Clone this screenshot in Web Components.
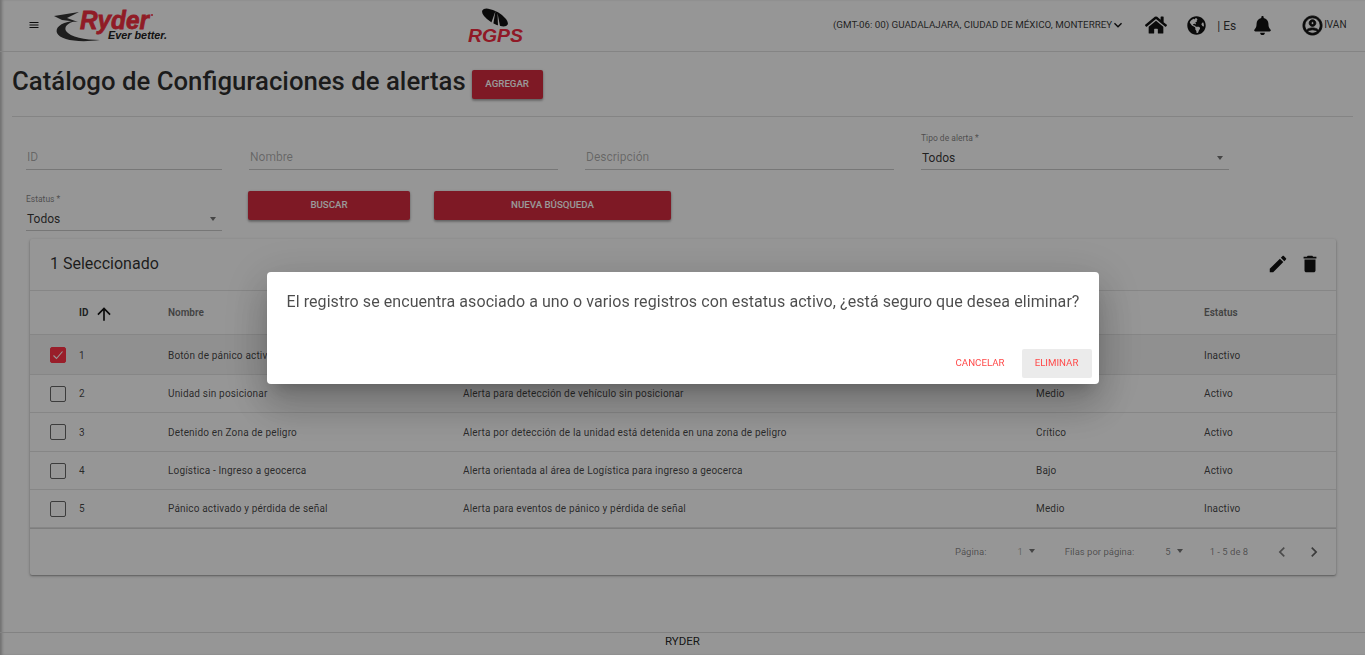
<!DOCTYPE html>
<html lang="es">
<head>
<meta charset="utf-8">
<title>Catálogo de Configuraciones de alertas</title>
<style>
  html, body { margin: 0; height: 100%; background: #fafafa; overflow: hidden; }
  body { font-family: Roboto, "Liberation Sans", sans-serif; color: rgba(0,0,0,.87); }
</style>
</head>
<body>
<app-shell>
  <app-header slot="header"></app-header>
  <page-title title-text="Catálogo de Configuraciones de alertas"></page-title>
  <search-form></search-form>
  <alert-table></alert-table>
</app-shell>
<confirm-dialog>El registro se encuentra asociado a uno o varios registros con estatus activo, ¿está seguro que desea eliminar?</confirm-dialog>

<script>
const ICONS = {
  menu: ["0 0 24 24", "M3 18h18v-2H3v2zm0-5h18v-2H3v2zm0-7v2h18V6H3z"],
  expand: ["0 0 24 24", "M16.59 8.59L12 13.17 7.41 8.59 6 10l6 6 6-6z"],
  home: ["0 0 576 512", "M280.37 148.26L96 300.11V464a16 16 0 0 0 16 16l112.06-.29a16 16 0 0 0 15.92-16V368a16 16 0 0 1 16-16h64a16 16 0 0 1 16 16v95.64a16 16 0 0 0 16 16.05L464 480a16 16 0 0 0 16-16V300L295.67 148.26a12.19 12.19 0 0 0-15.3 0zM571.6 251.47L488 182.56V44.05a12 12 0 0 0-12-12h-56a12 12 0 0 0-12 12v72.61L318.47 43a48 48 0 0 0-61 0L4.34 251.47a12 12 0 0 0-1.6 16.9l25.5 31A12 12 0 0 0 45.15 301l235.22-193.74a12.19 12.19 0 0 1 15.3 0L530.9 301a12 12 0 0 0 16.9-1.6l25.5-31a12 12 0 0 0-1.7-16.93z"],
  globe: ["0 0 496 512", "M248 8C111.03 8 0 119.03 0 256s111.03 248 248 248 248-111.03 248-248S384.97 8 248 8zm82.29 357.6c-3.9 3.88-7.99 7.95-11.31 11.28-2.99 3-5.1 6.7-6.17 10.71-1.51 5.66-2.73 11.38-4.77 16.87l-17.39 46.85c-13.76 3-28 4.69-42.65 4.69v-27.38c1.69-12.62-7.64-36.26-22.63-51.25-6-6-9.37-14.14-9.37-22.63v-32.01c0-11.64-6.27-22.34-16.46-27.97-14.37-7.95-34.81-19.06-48.81-26.11-11.48-5.78-22.1-13.14-31.65-21.75l-.8-.72a114.792 114.792 0 0 1-18.06-20.74c-9.38-13.77-24.66-36.42-34.59-51.14 20.47-45.5 57.36-82.04 103.2-101.89l24.01 12.01C203.48 89.74 216 82.01 216 70.11v-11.3c7.99-1.29 16.12-2.11 24.39-2.42l28.3 28.3c6.25 6.25 6.25 16.38 0 22.63L264 112l-10.34 10.34c-3.12 3.12-3.12 8.19 0 11.31l4.69 4.69c3.12 3.12 3.12 8.19 0 11.31l-8 8a8.008 8.008 0 0 1-5.66 2.34h-8.99c-2.08 0-4.08.81-5.58 2.27l-9.92 9.65a8.008 8.008 0 0 0-1.58 9.31l15.59 31.19c2.66 5.32-1.21 11.58-7.15 11.58h-5.64c-1.93 0-3.79-.7-5.24-1.96l-9.28-8.06a16.017 16.017 0 0 0-15.55-3.1l-31.17 10.39a11.95 11.95 0 0 0-8.17 11.34c0 4.53 2.56 8.66 6.61 10.69l11.08 5.54c9.41 4.71 19.79 7.16 30.31 7.16s22.59 27.29 32 32h66.75c8.49 0 16.62 3.37 22.63 9.37l13.69 13.69a30.503 30.503 0 0 1 8.93 21.57 46.536 46.536 0 0 1-13.72 32.98zM417 274.25c-5.79-1.45-10.84-5-14.15-9.97l-17.98-26.97a23.97 23.97 0 0 1 0-26.62l19.59-29.38c2.32-3.47 5.5-6.29 9.24-8.15l12.98-6.49C440.2 193.59 448 223.87 448 256c0 8.67-.74 17.16-1.82 25.54L417 274.25z"],
  bell: ["0 0 448 512", "M224 512c35.32 0 63.97-28.65 63.97-64H160.03c0 35.35 28.65 64 63.97 64zm215.39-149.71c-19.32-20.76-55.47-51.99-55.47-154.29 0-77.7-54.48-139.9-127.94-155.16V32c0-17.67-14.32-32-31.98-32s-31.98 14.33-31.98 32v20.84C118.56 68.1 64.08 130.3 64.08 208c0 102.3-36.15 133.53-55.47 154.29-6 6.45-8.66 14.16-8.61 21.71.11 16.4 12.98 32 32.1 32h383.8c19.12 0 32-15.6 32.1-32 .05-7.55-2.61-15.27-8.61-21.71z"],
  account: ["0 0 24 24", "M12 2C6.48 2 2 6.48 2 12s4.48 10 10 10 10-4.48 10-10S17.52 2 12 2zM7.07 18.28c.43-.9 3.05-1.78 4.93-1.78s4.51.88 4.93 1.78C15.57 19.36 13.86 20 12 20s-3.57-.64-4.93-1.72zm11.29-1.45c-1.43-1.74-4.9-2.33-6.36-2.33s-4.93.59-6.36 2.33C4.62 15.49 4 13.82 4 12c0-4.41 3.59-8 8-8s8 3.59 8 8c0 1.82-.62 3.49-1.64 4.83zM12 6c-1.94 0-3.5 1.56-3.5 3.5S10.06 13 12 13s3.5-1.56 3.5-3.5S13.94 6 12 6zm0 5c-.83 0-1.5-.67-1.5-1.5S11.17 8 12 8s1.5.67 1.5 1.5S12.83 11 12 11z"],
  edit: ["0 0 24 24", "M3 17.25V21h3.75L17.81 9.94l-3.75-3.75L3 17.25zM20.71 7.04c.39-.39.39-1.02 0-1.41l-2.34-2.34c-.39-.39-1.02-.39-1.41 0l-1.83 1.83 3.75 3.75 1.83-1.83z"],
  trash: ["0 0 24 24", "M6 19c0 1.1.9 2 2 2h8c1.1 0 2-.9 2-2V7H6v12zM19 4h-3.5l-1-1h-5l-1 1H5v2h14V4z"],
  up: ["0 0 24 24", "M4 12l1.41 1.41L11 7.83V20h2V7.83l5.58 5.59L20 12l-8-8-8 8z"],
  left: ["0 0 24 24", "M15.41 7.41L14 6l-6 6 6 6 1.41-1.41L10.83 12z"],
  right: ["0 0 24 24", "M10 6L8.59 7.41 13.17 12l-4.58 4.59L10 18l6-6z"],
};

class UiIcon extends HTMLElement {
  constructor() {
    super();
    this.attachShadow({ mode: "open" });
  }
  connectedCallback() {
    const [box, d] = ICONS[this.getAttribute("name")];
    const size = this.getAttribute("size") || 24;
    this.shadowRoot.innerHTML = `
      <style>
        :host { display: inline-flex; flex: none; color: inherit; }
        :host([bold]) path { stroke: currentColor; stroke-width: .9; }
        svg { display: block; fill: currentColor; }
      </style>
      <svg width="${size}" height="${size}" viewBox="${box}"><path d="${d}"/></svg>`;
  }
}

class AppShell extends HTMLElement {
  constructor() {
    super();
    this.attachShadow({ mode: "open" }).innerHTML = `
      <style>
        :host { display: flex; flex-direction: column; height: 655px; box-shadow: inset 3px 0 3px -1px rgba(0,0,0,.25); }
        main { flex: 1; min-height: 0; }
        footer { height: 22px; border-top: 1px solid #d9d9d9; font-size: 11.5px; line-height: 17px; text-align: center; color: rgba(0,0,0,.87); }
      </style>
      <slot name="header"></slot>
      <main><slot></slot></main>
      <footer>RYDER</footer>`;
  }
}

class AppHeader extends HTMLElement {
  constructor() {
    super();
    this.attachShadow({ mode: "open" }).innerHTML = `
      <style>
        :host { display: flex; align-items: center; height: 51px; border-bottom: 1px solid #dcdcdc; color: #111; }
        .menu { margin-left: 28px; margin-top: -1px; }
        .ryder { margin-left: 10px; }
        .rgps { margin-left: 290px; }
        .zone { margin-left: 303px; margin-top: -2px; font-size: 9.8px; color: rgba(0,0,0,.8); white-space: nowrap; }
        .chev { margin: -2px 0 0 -2px; }
        .home { margin-left: 19px; margin-top: -2px; }
        .globe { margin-left: 20px; margin-top: -1px; }
        .lang { margin-left: 11px; font-size: 12px; color: rgba(0,0,0,.8); }
        .bell { margin-left: 17px; }
        .user { margin-left: 29px; }
        .name { font-size: 10px; color: rgba(0,0,0,.8); margin-top: -3px; }
      </style>
      <ui-icon class="menu" name="menu" size="12"></ui-icon>
      <svg class="ryder" width="125" height="41" viewBox="50 5 125 41">
        <path d="M72 21 C60 23 55 28 57 33 C60 40 78 43 100 40 C85 40 70 37 66 31 C64 27 67 23 76 21Z" fill="#333"/>
        <path d="M54 16 L79 12 L67 18 L78 22 L62 20Z" fill="#333"/>
        <text x="80" y="29" font-family="Liberation Sans" font-weight="700" font-style="italic" font-size="25" textLength="69" lengthAdjust="spacingAndGlyphs" fill="#f03040" stroke="#f03040" stroke-width=".8">Ryder</text>
        <circle cx="152" cy="15" r="1" fill="#f03040"/>
        <text x="108" y="38.5" font-family="Liberation Sans" font-weight="700" font-style="italic" font-size="11" textLength="59" lengthAdjust="spacingAndGlyphs" fill="#222">Ever better.</text>
      </svg>
      <svg class="rgps" width="65" height="41" viewBox="465 5 65 41">
        <ellipse cx="495" cy="17.5" rx="14.5" ry="6" transform="rotate(30 495 17.5)" fill="#111"/>
        <path d="M495.5 11 L490.5 25 L493 25.5Z M497.5 13 L498 26 L500 26Z" fill="#fafafa"/>
        <text x="468" y="42" font-family="Liberation Sans" font-weight="700" font-style="italic" font-size="18" textLength="55" lengthAdjust="spacingAndGlyphs" fill="#f02a40">RGPS</text>
      </svg>
      <span class="zone">(GMT-06: 00) GUADALAJARA, CIUDAD DE MÉXICO, MONTERREY</span>
      <ui-icon class="chev" name="expand" size="16"></ui-icon>
      <ui-icon class="home" name="home" size="22"></ui-icon>
      <ui-icon class="globe" name="globe" size="19"></ui-icon>
      <span class="lang">| Es</span>
      <ui-icon class="bell" name="bell" size="19"></ui-icon>
      <ui-icon class="user" name="account" size="23" bold></ui-icon>
      <span class="name">IVAN</span>`;
  }
}

class RedButton extends HTMLElement {
  constructor() {
    super();
    this.attachShadow({ mode: "open" }).innerHTML = `
      <style>
        :host { display: flex; flex: none; align-items: center; justify-content: center; height: 29px; box-sizing: border-box; padding-bottom: 2px; border-radius: 2px; background: #d22b3e; color: #fff; font-size: 9.7px; font-weight: 500; box-shadow: 0 1px 3px rgba(0,0,0,.3), 0 2px 2px rgba(0,0,0,.14); }
      </style>
      <slot></slot>`;
  }
}

class PageTitle extends HTMLElement {
  constructor() {
    super();
    this.attachShadow({ mode: "open" }).innerHTML = `
      <style>
        :host { display: block; margin: 0 12px; padding-top: 18px; padding-bottom: 17px; border-bottom: 1px solid #dcdcdc; }
        .row { display: flex; gap: 6px; align-items: flex-start; }
        h1 { margin: 0; font-size: 25.75px; line-height: 22px; font-weight: 500; color: rgba(0,0,0,.82); }
        red-button { width: 71px; }
      </style>
      <div class="row"><h1>${this.getAttribute("title-text")}</h1><red-button>AGREGAR</red-button></div>`;
  }
}

class TextField extends HTMLElement {
  constructor() {
    super();
    this.attachShadow({ mode: "open" }).innerHTML = `
      <style>
        :host { display: flex; flex-direction: column; justify-content: flex-end; height: 37px; border-bottom: 1px solid #c6c6c6; box-sizing: border-box; }
        span { font-size: 12px; line-height: 14px; padding: 0 0 5px 1px; color: rgba(0,0,0,.32); }
      </style>
      <span><slot></slot></span>`;
  }
}

class SelectField extends HTMLElement {
  constructor() {
    super();
    this.attachShadow({ mode: "open" }).innerHTML = `
      <style>
        :host { display: flex; flex-direction: column; height: 37px; border-bottom: 1px solid #c6c6c6; box-sizing: border-box; }
        label { font-size: 8.5px; line-height: 11px; color: rgba(0,0,0,.5); }
        .val { display: flex; align-items: center; justify-content: space-between; flex: 1; padding: 2px 3px 0 1px; font-size: 12px; color: rgba(0,0,0,.8); }
        i { width: 0; height: 0; border: 3.5px solid transparent; border-top: 4px solid rgba(0,0,0,.54); border-bottom: 0; margin-right: 3px; }
      </style>
      <label>${this.getAttribute("label")}</label>
      <div class="val"><span><slot></slot></span><i></i></div>`;
  }
}

class SearchForm extends HTMLElement {
  constructor() {
    super();
    this.attachShadow({ mode: "open" }).innerHTML = `
      <style>
        :host { display: block; padding: 16px 0 0 26px; }
        .top { display: grid; grid-template-columns: 196px 309px 309px 308px; column-gap: 27px; }
        .bottom { display: flex; align-items: flex-start; margin-top: 21px; }
        .bottom select-field { width: 196px; margin-top: 3px; flex: none; }
        .buscar { width: 162px; margin-left: 26px; }
        .nueva { width: 237px; margin-left: 24px; }
      </style>
      <div class="top">
        <text-field>ID</text-field>
        <text-field>Nombre</text-field>
        <text-field>Descripción</text-field>
        <select-field label="Tipo de alerta *">Todos</select-field>
      </div>
      <div class="bottom">
        <select-field label="Estatus *">Todos</select-field>
        <red-button class="buscar">BUSCAR</red-button>
        <red-button class="nueva">NUEVA BÚSQUEDA</red-button>
      </div>`;
  }
}

class CheckBox extends HTMLElement {
  constructor() {
    super();
    const on = this.hasAttribute("checked");
    this.attachShadow({ mode: "open" }).innerHTML = `
      <style>
        :host { display: block; width: 16px; height: 16px; box-sizing: border-box; border-radius: 2px; border: 1px solid ${on ? "#ff3346" : "rgba(0,0,0,.6)"}; background: ${on ? "#ff3346" : "transparent"}; }
        svg { display: block; }
      </style>
      ${on ? `<svg width="14" height="14" viewBox="0 0 14 14"><path d="M2.5 7.5l3 3 6-7" fill="none" stroke="#fff" stroke-width="1.1"/></svg>` : ""}`;
  }
}

class TableRow extends HTMLElement {
  constructor() {
    super();
    const [id, name, desc, level, status] = this.getAttribute("cells").split("|");
    const check = this.hasAttribute("selected") ? "checked" : "";
    this.attachShadow({ mode: "open" }).innerHTML = `
      <style>
        :host { display: grid; grid-template-columns: 49px 89px 295px 573px 168px 1fr; align-items: center; border-bottom: 1px solid #e0e0e0; box-sizing: border-box; font-size: 10px; letter-spacing: .17px; color: rgba(0,0,0,.74); }
        :host([selected]) { background: #f0f0f0; }
        :host([selected]) div + div { padding-top: 2px; }
        .box { padding-left: 20px; }
      </style>
      <div class="box"><check-box ${check}></check-box></div>
      <div>${id}</div><div>${name}</div><div>${desc}</div><div>${level}</div><div>${status}</div>`;
  }
}

class AlertTable extends HTMLElement {
  constructor() {
    super();
    this.attachShadow({ mode: "open" }).innerHTML = `
      <style>
        :host { display: block; margin: 8px 29px 0 30px; width: 1306px; height: 336px; box-sizing: border-box; border-radius: 2px; box-shadow: 0 1px 3px rgba(0,0,0,.3), 0 1px 1px rgba(0,0,0,.14); }
        .bar { display: flex; align-items: center; height: 52px; padding: 0 15px 1px 20px; border-bottom: 1px solid #e0e0e0; box-sizing: border-box; color: #111; }
        .bar span { flex: 1; font-size: 16px; margin-top: -1px; color: rgba(0,0,0,.82); }
        .bar ui-icon + ui-icon { margin-left: 10px; }
        .head { display: grid; grid-template-columns: 49px 89px 1036px 1fr; align-items: center; height: 44px; border-bottom: 1px solid #e0e0e0; box-sizing: border-box; font-size: 10px; font-weight: 700; color: rgba(0,0,0,.56); }
        .head .id { grid-column: 2; display: flex; align-items: center; gap: 6px; color: rgba(0,0,0,.8); }
        .head .id ui-icon { color: #111; margin-top: 2px; }
        table-row { height: 38px; }
        table-row:first-of-type { height: 40px; }
        table-row:nth-of-type(3) { height: 39px; }
        .pager { display: flex; align-items: center; height: 46px; border-top: 1px solid #d0d0d0; box-sizing: border-box; font-size: 9.5px; color: rgba(0,0,0,.48); padding: 0 0 1px 925px; }
        .pager i { display: inline-block; width: 0; height: 0; border: 3.5px solid transparent; border-top: 4px solid rgba(0,0,0,.54); border-bottom: 0; margin-left: 6px; vertical-align: 2px; }
        .pg { margin-left: 31px; color: rgba(0,0,0,.36); }
        .rows { margin-left: 30px; }
        .five { margin-left: 31px; }
        .range { margin-left: 27px; }
        .prev { margin-left: 24px; margin-top: 2px; color: rgba(0,0,0,.5); }
        .next { margin-left: 12px; margin-top: 2px; color: rgba(0,0,0,.6); }
      </style>
      <div class="bar">
        <span>1 Seleccionado</span>
        <ui-icon name="edit" size="22"></ui-icon>
        <ui-icon name="trash" size="22"></ui-icon>
      </div>
      <div class="head">
        <div class="id">ID <ui-icon name="up" size="20"></ui-icon></div>
        <div>Nombre</div>
        <div>Estatus</div>
      </div>
      <table-row selected cells="1|Botón de pánico activado|||Inactivo"></table-row>
      <table-row cells="2|Unidad sin posicionar|Alerta para detección de vehículo sin posicionar|Medio|Activo"></table-row>
      <table-row cells="3|Detenido en Zona de peligro|Alerta por detección de la unidad está detenida en una zona de peligro|Crítico|Activo"></table-row>
      <table-row cells="4|Logística - Ingreso a geocerca|Alerta orientada al área de Logística para ingreso a geocerca|Bajo|Activo"></table-row>
      <table-row cells="5|Pánico activado y pérdida de señal|Alerta para eventos de pánico y pérdida de señal|Medio|Inactivo"></table-row>
      <div class="pager">
        <span>Página:</span>
        <span class="pg">1<i></i></span>
        <span class="rows">Filas por página:</span>
        <span class="five">5<i></i></span>
        <span class="range">1 - 5 de 8</span>
        <ui-icon class="prev" name="left" size="20"></ui-icon>
        <ui-icon class="next" name="right" size="20"></ui-icon>
      </div>`;
  }
}

class ConfirmDialog extends HTMLElement {
  constructor() {
    super();
    this.attachShadow({ mode: "open" }).innerHTML = `
      <style>
        :host { position: fixed; inset: 0; display: flex; align-items: center; justify-content: center; background: rgba(0,0,0,.4); }
        .box { width: 832px; height: 112px; box-sizing: border-box; display: flex; flex-direction: column; justify-content: space-between; background: #fff; border-radius: 4px; box-shadow: 0 11px 15px -7px rgba(0,0,0,.2), 0 24px 38px 3px rgba(0,0,0,.14), 0 9px 46px 8px rgba(0,0,0,.12); }
        p { margin: 0; padding: 20px 20px 0; font-size: 16px; line-height: 20px; color: rgba(0,0,0,.7); letter-spacing: .073px; white-space: nowrap; }
        .actions { display: flex; justify-content: flex-end; align-items: center; gap: 7px; padding: 0 7px 6px; }
        span { display: flex; align-items: center; justify-content: center; height: 29px; box-sizing: border-box; padding: 0 10px 2px; border-radius: 2px; font-size: 9.7px; color: #ff4a4a; }
        .on { background: #ebebeb; width: 70px; padding: 0 0 2px; }
      </style>
      <div class="box">
        <p><slot></slot></p>
        <div class="actions"><span>CANCELAR</span><span class="on">ELIMINAR</span></div>
      </div>`;
  }
}

customElements.define("ui-icon", UiIcon);
customElements.define("app-shell", AppShell);
customElements.define("app-header", AppHeader);
customElements.define("red-button", RedButton);
customElements.define("page-title", PageTitle);
customElements.define("text-field", TextField);
customElements.define("select-field", SelectField);
customElements.define("search-form", SearchForm);
customElements.define("check-box", CheckBox);
customElements.define("table-row", TableRow);
customElements.define("alert-table", AlertTable);
customElements.define("confirm-dialog", ConfirmDialog);
</script>
</body>
</html>
